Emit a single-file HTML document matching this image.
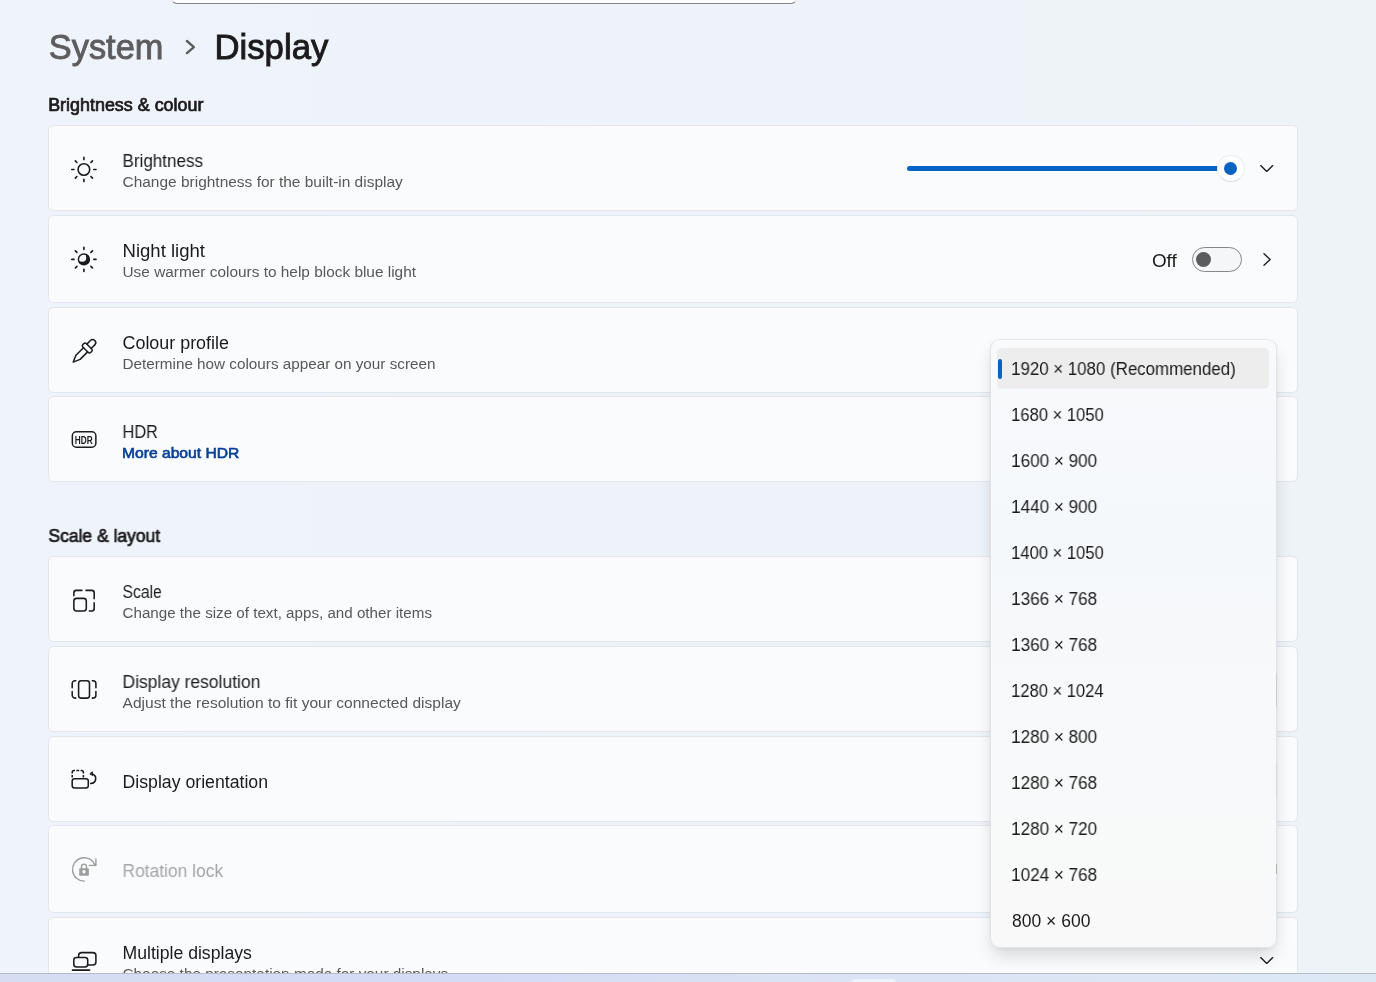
<!DOCTYPE html>
<html lang="en"><head><meta charset="utf-8"><title>Settings - Display</title>
<style>
html,body{margin:0;padding:0}
body{width:1376px;height:982px;overflow:hidden;position:relative;background:#eef3fa;font-family:"Liberation Sans",sans-serif}
.bg{position:absolute;left:0;top:0;width:1376px;height:982px;background:linear-gradient(90deg,#eff3fb 0%,#eef3fa 45%,#eef3f8 100%)}
.t{position:absolute;left:0;top:0;white-space:nowrap;line-height:1;will-change:transform;transform-origin:0 0;font-family:"Liberation Sans",sans-serif}
.sb{-webkit-text-stroke:.026em currentColor}
.b{-webkit-text-stroke:.042em currentColor}
.card{position:absolute;left:48px;width:1250px;box-sizing:border-box;background:#fafbfd;border:1px solid #e3e7ec;border-radius:5.5px}
.search{position:absolute;left:171px;top:-29px;width:626px;height:33px;box-sizing:border-box;background:#fdfdfe;border:1px solid #e4e6ea;border-bottom:1px solid #868686;border-radius:6px}
.track{position:absolute;left:907px;top:166px;width:316px;height:5px;border-radius:2.5px;background:#0663c4}
.thumb{position:absolute;left:1217.3px;top:155.1px;width:27.4px;height:27.4px;box-sizing:border-box;border-radius:50%;background:#fff;border:1px solid #ebecef;border-bottom-color:#dcdde0}
.thumb i{position:absolute;left:50%;top:50%;width:13.4px;height:13.4px;margin:-6.9px 0 0 -7.2px;border-radius:50%;background:#0663c4}
.toggle{position:absolute;left:1192px;top:247px;width:50px;height:25px;box-sizing:border-box;border:1px solid #878787;border-radius:12.5px;background:#f5f6f8}
.toggle i{position:absolute;left:2.7px;top:3.9px;width:15px;height:15px;border-radius:50%;background:#5c5c5c}
.popup{position:absolute;left:990px;top:339px;width:287px;height:609px;box-sizing:border-box;background:linear-gradient(180deg,#f8fafc 0%,#f5f8fb 32%,#f7f9fa 60%,#f9f9f9 100%);border:1px solid #e1e3e6;border-top-color:#e8eaed;border-radius:9.5px;box-shadow:0 10px 18px -3px rgba(0,0,0,.15),0 1px 4px rgba(0,0,0,.05)}
.sel{position:absolute;left:997px;top:348.3px;width:272px;height:40.5px;border-radius:5px;background:#ededee}
.pill{position:absolute;left:998px;top:358.8px;width:4px;height:20.4px;border-radius:2px;background:#0663c4}
.taskbar{position:absolute;left:0;top:973px;width:1376px;height:9px;background:linear-gradient(90deg,#d6ddf3 0%,#d3dcf4 35%,#dbe3f4 60%,#dde8f5 100%);border-top:1px solid #b4bbc9;box-sizing:border-box}
.edge{position:absolute;left:1276px;width:1px}
.tbtn{position:absolute;left:850px;top:979px;width:47px;height:10px;border-radius:5px;background:#eef2fb}
svg{position:absolute;left:0;top:0;overflow:visible}
</style></head>
<body>
<div class="bg"></div>
<div class="search"></div>
<div class="card" style="top:125px;height:86px"></div>
<div class="card" style="top:215px;height:88px"></div>
<div class="card" style="top:307px;height:86px"></div>
<div class="card" style="top:396px;height:86px"></div>
<div class="card" style="top:556px;height:86px"></div>
<div class="card" style="top:646px;height:86px"></div>
<div class="card" style="top:736px;height:86px"></div>
<div class="card" style="top:825px;height:88px"></div>
<div class="card" style="top:917px;height:86px"></div>
<span class="t sb" style="font-size:34.2px;color:#5d5d5d;transform:translate(48.85px,30.00px) scaleX(1.0045)">System</span>
<span class="t sb" style="font-size:34.2px;color:#1b1b1b;transform:translate(214.46px,30.00px) scaleX(1.0158)">Display</span>
<span class="t b" style="font-size:17.5px;color:#1b1b1b;transform:translate(48.18px,97.00px) scaleX(1.0229)">Brightness &amp; colour</span>
<span class="t r" style="font-size:17.5px;color:#1b1b1b;transform:translate(122.50px,153.00px) scaleX(0.9732)">Brightness</span>
<span class="t r" style="font-size:14.7px;color:#585858;transform:translate(122.50px,175.00px) scaleX(1.0530)">Change brightness for the built-in display</span>
<span class="t r" style="font-size:17.5px;color:#1b1b1b;transform:translate(122.50px,243.00px) scaleX(1.0598)">Night light</span>
<span class="t r" style="font-size:14.7px;color:#585858;transform:translate(122.50px,265.00px) scaleX(1.0482)">Use warmer colours to help block blue light</span>
<span class="t r" style="font-size:17.5px;color:#1b1b1b;transform:translate(122.50px,335.00px) scaleX(1.0228)">Colour profile</span>
<span class="t r" style="font-size:14.7px;color:#585858;transform:translate(122.50px,357.00px) scaleX(1.0388)">Determine how colours appear on your screen</span>
<span class="t r" style="font-size:17.5px;color:#1b1b1b;transform:translate(122.50px,424.00px) scaleX(0.9324)">HDR</span>
<span class="t b" style="font-size:15px;color:#083f97;transform:translate(121.96px,445.00px) scaleX(1.0427)">More about HDR</span>
<span class="t b" style="font-size:17.5px;color:#1b1b1b;transform:translate(48.40px,528.00px) scaleX(0.9991)">Scale &amp; layout</span>
<span class="t r" style="font-size:17.5px;color:#1b1b1b;transform:translate(122.50px,584.00px) scaleX(0.8977)">Scale</span>
<span class="t r" style="font-size:14.7px;color:#585858;transform:translate(122.50px,606.00px) scaleX(1.0328)">Change the size of text, apps, and other items</span>
<span class="t r" style="font-size:17.5px;color:#1b1b1b;transform:translate(122.50px,674.00px) scaleX(0.9978)">Display resolution</span>
<span class="t r" style="font-size:14.7px;color:#585858;transform:translate(122.50px,696.00px) scaleX(1.0600)">Adjust the resolution to fit your connected display</span>
<span class="t r" style="font-size:17.5px;color:#1b1b1b;transform:translate(122.50px,774.00px) scaleX(1.0109)">Display orientation</span>
<span class="t r" style="font-size:17.5px;color:#a5a5a5;transform:translate(122.50px,863.00px) scaleX(0.9941)">Rotation lock</span>
<span class="t r" style="font-size:17.5px;color:#1b1b1b;transform:translate(122.50px,945.00px) scaleX(1.0074)">Multiple displays</span>
<span class="t r" style="font-size:14.7px;color:#585858;transform:translate(122.50px,967.00px) scaleX(1.0442)">Choose the presentation mode for your displays</span>
<span class="t r" style="font-size:17.5px;color:#1b1b1b;transform:translate(1151.89px,253.00px) scaleX(1.0787)">Off</span>
<div class="track"></div><div class="thumb"><i></i></div>
<div class="toggle"><i></i></div>
<svg width="1376" height="982" viewBox="0 0 1376 982" fill="none" stroke-linecap="round" stroke-linejoin="round">
<path d="M186.9,41 L193.9,47.05 L186.9,53.1" stroke="#5d5d5d" stroke-width="2.4"/>
<circle cx="83.9" cy="169.5" r="5.8" stroke="#1b1b1b" stroke-width="1.6"/>
<path d="M93.80,169.50L96.00,169.50M90.90,176.50L92.46,178.06M83.90,179.40L83.90,181.60M76.90,176.50L75.34,178.06M74.00,169.50L71.80,169.50M76.90,162.50L75.34,160.94M83.90,159.60L83.90,157.40M90.90,162.50L92.46,160.94" stroke="#1b1b1b" stroke-width="1.65"/>
<clipPath id="nl"><circle cx="83.9" cy="259.4" r="4.75"/></clipPath>
<circle cx="83.9" cy="259.4" r="6.2" fill="#1b1b1b"/>
<circle cx="82.2" cy="257.7" r="4.1" fill="#fafbfd" clip-path="url(#nl)"/>
<path d="M93.80,259.40L96.00,259.40M90.90,266.40L92.46,267.96M83.90,269.30L83.90,271.50M76.90,266.40L75.34,267.96M74.00,259.40L71.80,259.40M76.90,252.40L75.34,250.84M83.90,249.50L83.90,247.30M90.90,252.40L92.46,250.84" stroke="#1b1b1b" stroke-width="1.65"/>
<g transform="translate(83.9,351.4) rotate(45)" stroke="#1b1b1b" stroke-width="1.5"><path d="M-3.05,-7.2 V-12.3 A3.05,3.05 0 0 1 3.05,-12.3 V-7.2"/><rect x="-5.55" y="-7.2" width="11.1" height="4.9" rx="1.7"/><path d="M-2.95,-2.3 V8.3 L0,15.1 L2.95,8.3 V-2.3"/></g>
<rect x="72.35" y="431.75" width="23.5" height="15.5" rx="4" stroke="#1b1b1b" stroke-width="1.5"/>
<text x="74.8" y="444" font-family="Liberation Sans, sans-serif" font-weight="700" font-size="10.6" fill="#1b1b1b" textLength="17.9" lengthAdjust="spacingAndGlyphs">HDR</text>
<g transform="translate(0,0.4)" stroke="#1b1b1b" stroke-width="1.55"><path d="M73.85,595.4 V592.5 A2.5,2.5 0 0 1 76.35,590 H81.9 M86,590 H91.7 A2.5,2.5 0 0 1 94.2,592.5 V598.4 M94.2,602.5 V608.1 A2.5,2.5 0 0 1 91.7,610.6 H89.3"/><rect x="73.85" y="598" width="12.45" height="12.6" rx="2.7"/></g>
<g stroke="#1b1b1b" stroke-width="1.55"><rect x="78.6" y="680.7" width="10.9" height="17.4" rx="2.7"/><path d="M72.2,687.7 V683.5 A2.8,2.8 0 0 1 75,680.7 H75.8 M72.2,691.5 V695.3 A2.8,2.8 0 0 0 75,698.1 H75.8 M95.9,687.7 V683.5 A2.8,2.8 0 0 0 93.1,680.7 H92.3 M95.9,691.5 V695.3 A2.8,2.8 0 0 1 93.1,698.1 H92.3"/></g>
<g stroke="#1b1b1b" stroke-width="1.55"><rect x="72.2" y="778.7" width="16.1" height="9.3" rx="2.4"/><path stroke-linecap="butt" d="M72.2,773.5 V772.4 A1.9,1.9 0 0 1 74.1,770.5 H75 M76.4,770.5 H79.2 M80.6,770.5 H81.5 A1.9,1.9 0 0 1 83.4,772.4 V773.5 M72.2,775 V777.5 M83.4,775 V777.5"/><path d="M90.7,783.5 A5.5,4.9 0 0 0 91.2,773.8"/><path d="M92,772 L89.8,773.8 L92.3,775.4 Z" fill="{K}" stroke-width="1"/></g>
<g stroke="#9d9d9d" stroke-width="1.4"><path d="M84.4,881.1 A11.7,11.7 0 1 1 95.3,865.6 M89.3,865.4 H95.9 V858.9"/><path d="M81.5,868.5 V866.6 A2.5,2.5 0 0 1 86.5,866.6 V868.5"/><rect x="79.2" y="868.2" width="9.7" height="7.6" rx="0.8" fill="#9d9d9d" stroke="none"/><circle cx="84" cy="871.8" r="1.7" fill="#fafbfd" stroke="none"/></g>
<g stroke="#1b1b1b" stroke-width="1.55"><rect x="78.6" y="952.6" width="17.3" height="12.4" rx="3"/><rect x="73.8" y="957.5" width="13.9" height="9.4" rx="2.6" fill="#fafbfd"/><path d="M72.4,970.1 H89.6"/></g>
<g stroke="#1b1b1b" stroke-width="1.35"><path d="M1260.7,165.6 L1266.7,171.4 L1272.7,165.6"/><path d="M1264,253.7 L1270.1,259.5 L1264,265.3"/><path d="M1260.7,957.6 L1266.7,963.4 L1272.7,957.6"/></g>
</svg>
<div class="popup"></div>
<div class="sel"></div><div class="pill"></div>
<span class="t r" style="font-size:17.5px;color:#1b1b1b;transform:translate(1011.10px,361.00px) scaleX(0.9638)">1920 × 1080 (Recommended)</span>
<span class="t r" style="font-size:17.5px;color:#1b1b1b;transform:translate(1011.11px,407.00px) scaleX(0.9483)">1680 × 1050</span>
<span class="t r" style="font-size:17.5px;color:#1b1b1b;transform:translate(1011.08px,453.00px) scaleX(0.9779)">1600 × 900</span>
<span class="t r" style="font-size:17.5px;color:#1b1b1b;transform:translate(1011.08px,499.00px) scaleX(0.9779)">1440 × 900</span>
<span class="t r" style="font-size:17.5px;color:#1b1b1b;transform:translate(1011.11px,545.00px) scaleX(0.9483)">1400 × 1050</span>
<span class="t r" style="font-size:17.5px;color:#1b1b1b;transform:translate(1011.08px,591.00px) scaleX(0.9779)">1366 × 768</span>
<span class="t r" style="font-size:17.5px;color:#1b1b1b;transform:translate(1011.08px,637.00px) scaleX(0.9779)">1360 × 768</span>
<span class="t r" style="font-size:17.5px;color:#1b1b1b;transform:translate(1011.12px,683.00px) scaleX(0.9458)">1280 × 1024</span>
<span class="t r" style="font-size:17.5px;color:#1b1b1b;transform:translate(1011.08px,729.00px) scaleX(0.9779)">1280 × 800</span>
<span class="t r" style="font-size:17.5px;color:#1b1b1b;transform:translate(1011.08px,775.00px) scaleX(0.9779)">1280 × 768</span>
<span class="t r" style="font-size:17.5px;color:#1b1b1b;transform:translate(1011.08px,821.00px) scaleX(0.9779)">1280 × 720</span>
<span class="t r" style="font-size:17.5px;color:#1b1b1b;transform:translate(1011.08px,867.00px) scaleX(0.9779)">1024 × 768</span>
<span class="t r" style="font-size:17.5px;color:#1b1b1b;transform:translate(1012.05px,913.00px) scaleX(1.0000)">800 × 600</span>
<div class="edge" style="top:673px;height:34px;background:rgba(0,0,0,.09)"></div><div class="edge" style="top:764px;height:34px;background:rgba(0,0,0,.05)"></div><div class="edge" style="top:864px;height:10px;background:rgba(0,0,0,.22)"></div>
<div class="taskbar"></div><div class="tbtn"></div>
</body></html>
